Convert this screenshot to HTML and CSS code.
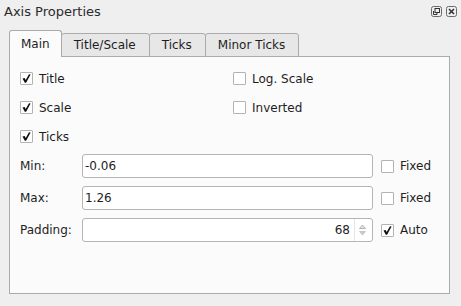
FILE: index.html
```html
<!DOCTYPE html>
<html lang="en">

<head>
    <meta charset="UTF-8">
    <title>Axis Properties</title>
    <link rel="stylesheet" href="styles.css">
</head>

<body>
    <div class="dock">
        <div class="dock-title">
            <span>Axis Properties</span>
            <div class="dock-btns">
                <!-- float -->
                <svg width="11" height="11" viewBox="0 0 11 11">
                    <rect x="0.5" y="0.5" width="10" height="10" rx="2" fill="none" stroke="#6a6a6a" />
                    <rect x="4" y="2.5" width="4.5" height="4" fill="none" stroke="#333" />
                    <path d="M2.5 5 V8.5 H6 V6.5" fill="none" stroke="#333" />
                </svg>
                <!-- close -->
                <svg width="11" height="11" viewBox="0 0 11 11">
                    <rect x="0.5" y="0.5" width="10" height="10" rx="2" fill="none" stroke="#6a6a6a" />
                    <path d="M3 3 L8 8 M8 3 L3 8" stroke="#333" stroke-width="1.6" />
                </svg>
            </div>
        </div>

        <div class="tabs">
            <div class="tab-bar">
                <div class="tab active">Main</div>
                <div class="tab">Title/Scale</div>
                <div class="tab">Ticks</div>
                <div class="tab">Minor Ticks</div>
                <div class="tab-fill"></div>
            </div>

            <div class="pane">
                <div class="checks">
                    <label class="check"><span class="box"><svg class="tick" viewBox="0 0 9 9"><path d="M0.5 4.4 L2.7 3.9 L3.7 5.9 L7 0.2 L8.6 0.5 L4.1 8.8 L2.8 8.8 Z" /></svg></span>Title</label>
                    <label class="check"><span class="box"></span>Log. Scale</label>
                    <label class="check"><span class="box"><svg class="tick" viewBox="0 0 9 9"><path d="M0.5 4.4 L2.7 3.9 L3.7 5.9 L7 0.2 L8.6 0.5 L4.1 8.8 L2.8 8.8 Z" /></svg></span>Scale</label>
                    <label class="check"><span class="box"></span>Inverted</label>
                    <label class="check"><span class="box"><svg class="tick" viewBox="0 0 9 9"><path d="M0.5 4.4 L2.7 3.9 L3.7 5.9 L7 0.2 L8.6 0.5 L4.1 8.8 L2.8 8.8 Z" /></svg></span>Ticks</label>
                </div>

                <div class="form">
                    <div class="lbl">Min:</div>
                    <div class="field">-0.06</div>
                    <label class="check"><span class="box"></span>Fixed</label>

                    <div class="lbl">Max:</div>
                    <div class="field">1.26</div>
                    <label class="check"><span class="box"></span>Fixed</label>

                    <div class="lbl">Padding:</div>
                    <div class="field spin">
                        <span class="val">68</span>
                        <span class="arrows">
                            <svg width="9" height="14" viewBox="0 0 9 14">
                                <path d="M1.5 5.5 L4.5 2 L7.5 5.5 Z" fill="#e4e4e4" stroke="#b4b4b4" />
                                <path d="M1.5 8.5 L4.5 12 L7.5 8.5 Z" fill="#c8c8c8" stroke="#c8c8c8" />
                            </svg>
                        </span>
                    </div>
                    <label class="check"><span class="box"><svg class="tick" viewBox="0 0 9 9"><path d="M0.5 4.4 L2.7 3.9 L3.7 5.9 L7 0.2 L8.6 0.5 L4.1 8.8 L2.8 8.8 Z" /></svg></span>Auto</label>
                </div>
            </div>
        </div>
    </div>
</body>

</html>
```

FILE: styles.css
```css
* {
    box-sizing: border-box;
}

body {
    margin: 0;
    background: #efefef;
    font-family: "DejaVu Sans", sans-serif;
    font-size: 12px;
    color: #1e1e1e;
}

.dock {
    width: 461px;
    height: 306px;
}

.dock-title {
    display: flex;
    justify-content: space-between;
    align-items: center;
    height: 23px;
    padding: 0 4px;
    font-size: 13px;
    color: #2b2b2b;
}

.dock-btns {
    display: flex;
    gap: 4px;
}

.tabs {
    padding: 7px 11px 0 9px;
}

.tab-bar {
    display: flex;
    align-items: flex-end;
    height: 27px;
}

.tab {
    height: 24px;
    line-height: 22px;
    padding: 0 13px 0 12px;
    margin-right: -1px;
    border: 1px solid #ababab;
    border-radius: 3px 3px 0 0;
    background: #e7e7e7;
}

.tab.active {
    height: 27px;
    line-height: 27px;
    padding: 0 11px;
    border-bottom: none;
    background: #fbfbfb;
}

.tab-fill {
    flex: 1;
    border-bottom: 1px solid #ababab;
}

.pane {
    height: 237px;
    padding: 7px 10px;
    background: #fbfbfb;
    border: 1px solid #ababab;
    border-top: none;
}

.checks {
    display: grid;
    grid-template-columns: 213px 1fr;
    grid-auto-rows: 29px;
}

.check {
    display: flex;
    align-items: center;
    gap: 6px;
}

.box {
    width: 13px;
    height: 13px;
    border: 1px solid #b3b3b3;
    border-radius: 1px;
    background: #fff;
    display: flex;
    align-items: center;
    justify-content: center;
}

.tick {
    width: 9px;
    height: 9px;
    fill: #111;
}

.form {
    display: grid;
    grid-template-columns: 62px 291px 1fr;
    grid-auto-rows: 24px;
    row-gap: 8px;
    margin-top: 3px;
}

.form .check {
    margin-left: 8px;
}

.lbl {
    display: flex;
    align-items: center;
}

.field {
    display: flex;
    align-items: center;
    padding: 0 2px;
    background: #fff;
    border: 1px solid #b5b5b5;
    border-radius: 3px;
}

.spin {
    justify-content: flex-end;
    padding: 0 2px 0 0;
}

.spin .val {
    margin-right: 4px;
}

.arrows {
    display: flex;
    align-items: center;
    height: 100%;
    padding: 0 3px;
    border-left: 1px solid #e6e6e6;
}
```
